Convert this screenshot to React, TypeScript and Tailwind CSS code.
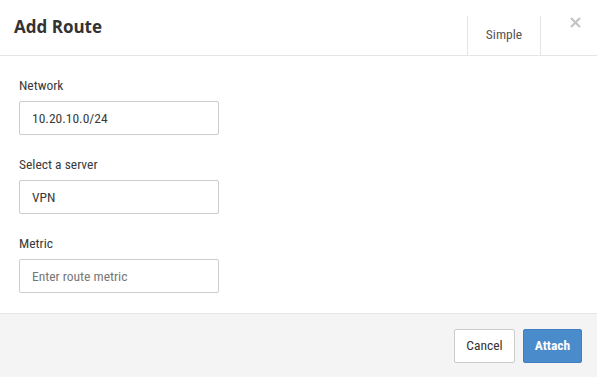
import React from 'react'

const narrow = { fontFamily: '"Roboto Condensed", "Liberation Sans Narrow", Roboto, sans-serif' }

const fields = [
  { label: 'Network', value: '10.20.10.0/24', placeholder: '' },
  { label: 'Select a server', value: 'VPN', placeholder: '' },
  { label: 'Metric', value: '', placeholder: 'Enter route metric' },
]

export default function App() {
  return (
    <div className="flex h-[377px] w-[597px] flex-col bg-white" style={narrow}>
      <div className="flex h-[56px] shrink-0 items-stretch border-b border-[#e5e5e5]">
        <h1
          className="flex-1 pl-[14px] pt-[14px] text-[17px] font-bold text-[#333]"
          style={{ fontFamily: '"Open Sans", "DejaVu Sans", sans-serif' }}
        >
          Add Route
        </h1>
        <div className="mt-[16px] flex w-[74px] items-center justify-center border-x border-[#e5e5e5] pb-[2px] text-[13.5px] text-[#555]">
          Simple
        </div>
        <button className="flex w-[56px] justify-end pr-[16px] pt-[17px] text-[#c4c4c4]">
          <svg width="11" height="11" viewBox="0 0 11 11">
            <path d="M1 1L10 10M10 1L1 10" stroke="currentColor" strokeWidth="2.2" />
          </svg>
        </button>
      </div>

      <div className="flex flex-1 flex-col gap-[21px] px-[19px] pt-[21px]">
        {fields.map((f) => (
          <div key={f.label} className="flex flex-col gap-[7px]">
            <label className="text-[13.5px] leading-[17px] text-[#3a3a3a]">{f.label}</label>
            <input
              readOnly
              defaultValue={f.value}
              placeholder={f.placeholder}
              className="h-[34px] w-[200px] rounded-[2px] border border-[#ccc] px-[12px] text-[13.5px] text-[#3a3a3a] placeholder:text-[#777] outline-none"
              style={narrow}
            />
          </div>
        ))}
      </div>

      <div className="flex h-[64px] shrink-0 items-center justify-end gap-[8px] border-t border-[#e5e5e5] bg-[#f4f4f4] pr-[15px]">
        <button className="h-[34px] w-[61px] rounded-[2px] border border-[#ccc] bg-white text-[13.5px] text-[#333]">
          Cancel
        </button>
        <button className="h-[34px] w-[59px] rounded-[2px] border border-[#3f7fc0] bg-[#4a8bcc] text-[13.5px] font-bold text-white">
          Attach
        </button>
      </div>
    </div>
  )
}
